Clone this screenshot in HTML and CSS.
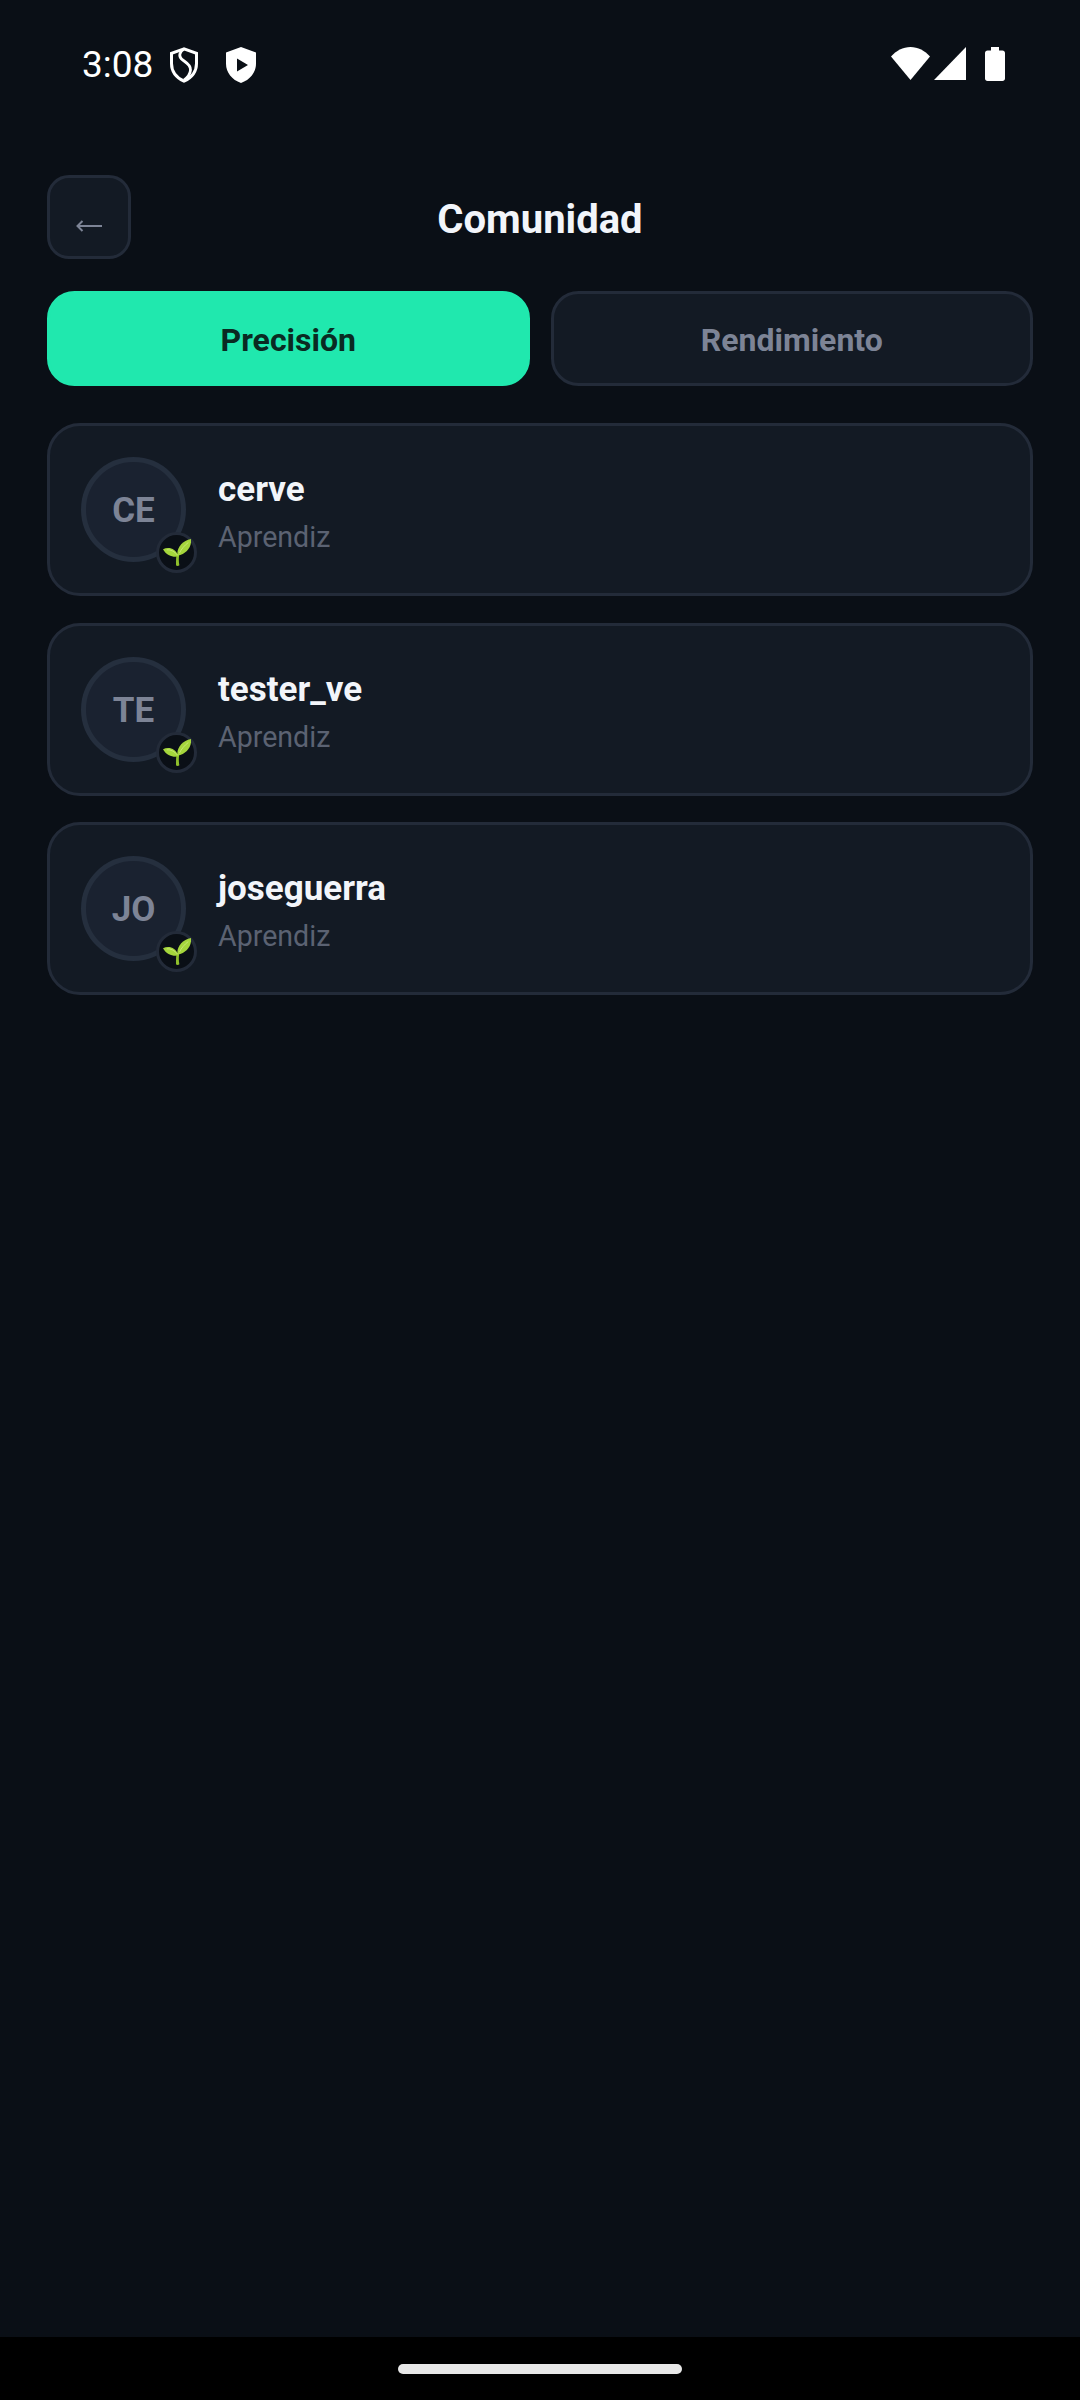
FILE: index.html
```html
<!DOCTYPE html>
<html lang="es">
<head>
  <meta charset="UTF-8">
  <meta name="viewport" content="width=device-width, initial-scale=1.0">
  <title>Comunidad</title>
  <link rel="stylesheet" href="styles.css">
</head>
<body>
  <svg class="defs" width="0" height="0">
    <symbol id="seedling" viewBox="0 0 27 26">
      <path d="M12.600 25.500c-.2-3.600 0-7.300.4-10.400l2.600.3c-.5 3.400-.5 6.700.2 10-.9.600-2.200.7-3.200.1z" fill="#8fbf2c"/>
      <path d="M14.800 16.600C10.600 18 3.400 16.200 0 9.800c5-2.400 12.200-1.400 14.800 6.800z" fill="#a5d63c"/>
      <path d="M14 16C12.800 8.800 18.400 1.700 27 0c.8 7.600-4.500 14.500-13 16z" fill="#a5d63c"/>
      <path d="M3.600 10.400c3.600-.3 7.500 1.500 10.600 5.200M16 13.400c1.600-3.700 4.700-7.200 8.400-10" fill="none" stroke="#c9e77a" stroke-width=".9"/>
    </symbol>
  </svg>

  <div class="status-bar">
    <div class="status-left">
      <span class="clock">3:08</span>
      <svg class="shield" viewBox="0 0 30 36">
        <path d="M15 1.800 2.500 6.400v10c0 8 5.200 14.300 12.500 17.800 7.300-3.500 12.500-9.800 12.500-17.800v-10z" fill="none" stroke="#fff" stroke-width="3"/>
        <path d="M15 2c-4.500 2.500-5.500 7-2.500 10 2.800 2.800 9.500 5 9 11-.2 3-2.500 7-6.500 10" fill="none" stroke="#fff" stroke-width="2.800"/>
      </svg>
      <svg class="shield second" viewBox="0 0 30 36">
        <path fill-rule="evenodd" d="M15 0 0 5.500v11.300C0 25.500 6 33 15 36c9-3 15-10.500 15-19.200V5.500zM11 11.500v13L22 18z" fill="#fff"/>
      </svg>
    </div>
    <div class="status-right">
      <svg class="wifi" viewBox="0 0 39 33"><path d="M19.500 33 0 9.600C5.200 3.600 12 0 19.500 0S33.800 3.600 39 9.600z" fill="#fff"/></svg>
      <svg class="signal" viewBox="0 0 32 33"><path d="M32 0v33H0z" fill="#fff"/></svg>
      <svg class="battery" viewBox="0 0 20 34"><path d="M6 0h8v3.500h3.500c1.400 0 2.500 1.100 2.500 2.500v25.500c0 1.400-1.100 2.500-2.500 2.500h-15C1.100 34 0 32.900 0 31.500V6c0-1.400 1.100-2.500 2.500-2.500H6z" fill="#fff"/></svg>
    </div>
  </div>

  <main class="screen">
    <header class="top-bar">
      <button class="back-btn" type="button" aria-label="Volver">
        <svg viewBox="0 0 26 14" width="26" height="14">
          <path d="M26 7H1.500M6.500 2 1.500 7 6.500 12" fill="none" stroke="#7d8496" stroke-width="2"/>
        </svg>
      </button>
      <h1>Comunidad</h1>
    </header>

    <div class="tabs">
      <button class="tab active" type="button">Precisión</button>
      <button class="tab" type="button">Rendimiento</button>
    </div>

    <ul class="user-list">
      <li class="user-card">
        <div class="avatar">
          CE
          <span class="badge"><svg><use href="#seedling"/></svg></span>
        </div>
        <div class="user-info">
          <div class="user-name">cerve</div>
          <div class="user-rank">Aprendiz</div>
        </div>
      </li>
      <li class="user-card">
        <div class="avatar">
          TE
          <span class="badge"><svg><use href="#seedling"/></svg></span>
        </div>
        <div class="user-info">
          <div class="user-name">tester_ve</div>
          <div class="user-rank">Aprendiz</div>
        </div>
      </li>
      <li class="user-card">
        <div class="avatar">
          JO
          <span class="badge"><svg><use href="#seedling"/></svg></span>
        </div>
        <div class="user-info">
          <div class="user-name">joseguerra</div>
          <div class="user-rank">Aprendiz</div>
        </div>
      </li>
    </ul>
  </main>

  <div class="nav-bar">
    <div class="home-pill"></div>
  </div>
</body>
</html>
```

FILE: styles.css
```css
* {
  box-sizing: border-box;
}

body {
  margin: 0;
  width: 1080px;
  height: 2400px;
  display: flex;
  flex-direction: column;
  background-color: #0a0f16;
  color: #f2f5fa;
  font-family: Roboto, "Liberation Sans", sans-serif;
}

.defs {
  position: absolute;
}

.status-bar {
  height: 175px;
  flex-shrink: 0;
  display: flex;
  justify-content: space-between;
  align-items: flex-start;
  padding: 47px 75px 0 82px;
}

.status-left,
.status-right {
  display: flex;
  align-items: flex-start;
}

.clock {
  font-size: 37px;
  line-height: 36px;
  color: #fff;
  margin-right: 16px;
}

.shield {
  width: 30px;
  height: 36px;
}

.shield.second {
  margin-left: 27px;
}

.wifi {
  width: 39px;
  height: 33px;
}

.signal {
  width: 32px;
  height: 33px;
  margin-left: 4px;
}

.battery {
  width: 20px;
  height: 34px;
  margin-left: 19px;
}

.screen {
  flex: 1;
  padding: 0 47px;
}

.top-bar {
  display: flex;
  align-items: center;
  height: 84px;
  margin-bottom: 32px;
}

.top-bar h1 {
  flex: 1;
  margin: 0 84px 0 0;
  padding-top: 5px;
  text-align: center;
  font-size: 40px;
  font-weight: 700;
  line-height: 50px;
}

.back-btn {
  width: 84px;
  height: 84px;
  padding: 17px 0 0;
  display: flex;
  align-items: center;
  justify-content: center;
  background-color: #131a24;
  border: 3px solid #232b39;
  border-radius: 22px;
}

.tabs {
  display: flex;
  gap: 21px;
  margin-bottom: 37px;
}

.tab {
  flex: 1;
  height: 95px;
  padding-top: 3px;
  font-family: inherit;
  font-size: 32px;
  font-weight: 700;
  color: #7d8496;
  background-color: #131a24;
  border: 3px solid #232b39;
  border-radius: 27.5px;
}

.tab.active {
  color: #0a2a22;
  background-color: #20e8ae;
  border-color: #20e8ae;
}

.user-list {
  list-style: none;
  margin: 0;
  padding: 0;
  display: flex;
  flex-direction: column;
  gap: 26.5px;
}

.user-card {
  height: 173px;
  display: flex;
  align-items: center;
  gap: 32px;
  padding: 0 31px;
  background-color: #131a24;
  border: 3px solid #232b39;
  border-radius: 33px;
}

.avatar {
  position: relative;
  width: 105px;
  height: 105px;
  padding-top: 2px;
  flex-shrink: 0;
  display: flex;
  align-items: center;
  justify-content: center;
  font-size: 35px;
  font-weight: 700;
  color: #7d8496;
  background-color: #1a2230;
  border: 5.5px solid #252f3e;
  border-radius: 50%;
}

.badge {
  position: absolute;
  right: -16px;
  bottom: -16px;
  width: 41px;
  height: 41px;
  display: flex;
  align-items: center;
  justify-content: center;
  background-color: #0a0f16;
  border: 3px solid #232b39;
  border-radius: 50%;
}

.badge svg {
  width: 28px;
  height: 27px;
}

.user-name {
  font-size: 35px;
  font-weight: 700;
  line-height: 46px;
  margin-top: 5px;
}

.user-rank {
  font-size: 28.6px;
  line-height: 40px;
  margin-top: 4px;
  color: #5b6272;
}

.nav-bar {
  height: 63px;
  flex-shrink: 0;
  display: flex;
  justify-content: center;
  padding-top: 27px;
  background-color: #000;
}

.home-pill {
  width: 284px;
  height: 10px;
  border-radius: 5px;
  background-color: #e8e8e8;
}
```
